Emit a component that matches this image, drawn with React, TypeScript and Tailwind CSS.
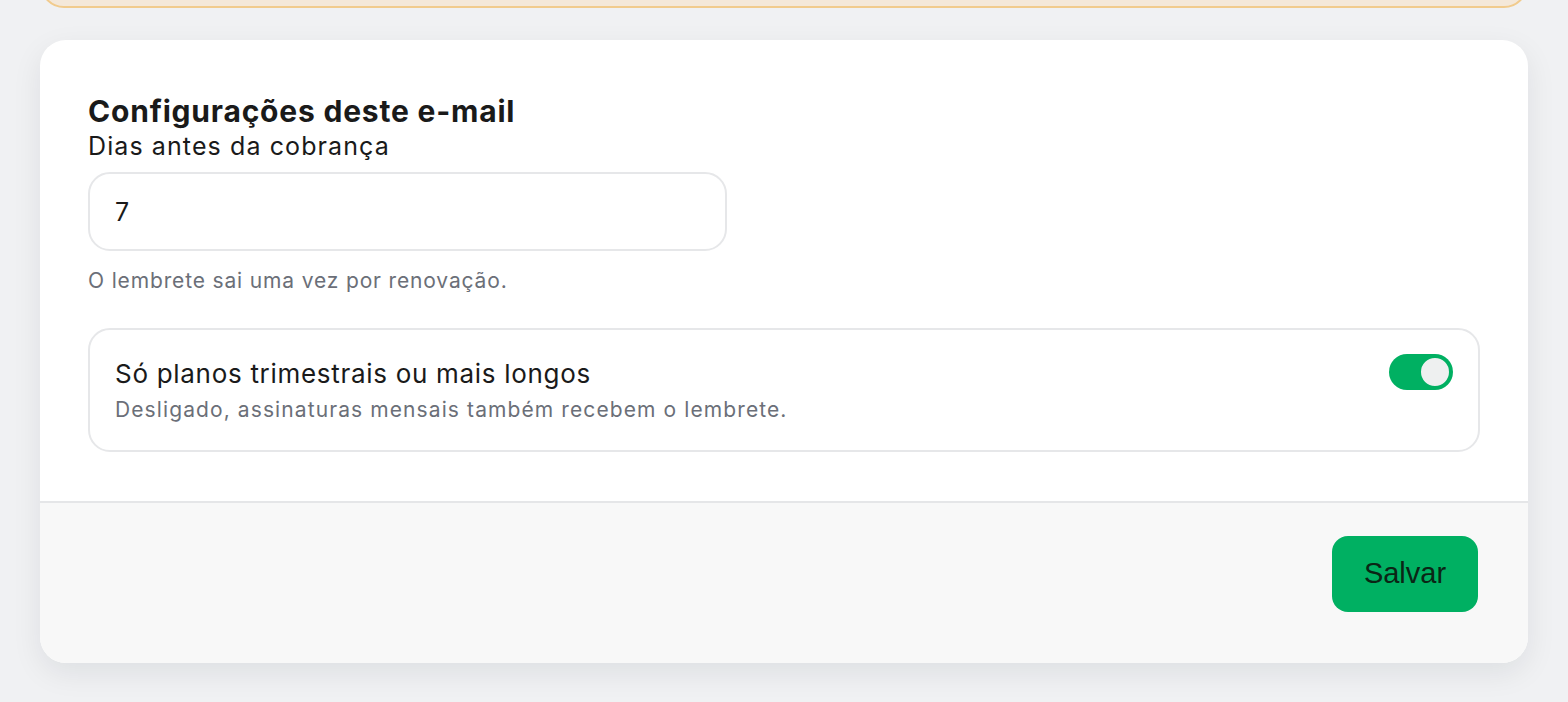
import React, { useState } from "react";

const App: React.FC = () => {
  const [days, setDays] = useState("7");
  const [longPlansOnly, setLongPlansOnly] = useState(true);

  return (
    <div
      className="min-h-screen bg-[#f0f1f3] px-[40px] pb-[40px]"
      style={{ fontFamily: "Inter, 'Noto Sans', sans-serif" }}
    >
      {/* warning banner from the section above, only its bottom edge is visible */}
      <div className="-mt-[40px] h-[48px] rounded-[24px] border-2 border-[#f1cb8d] bg-[#f4e8d9]" />

      <div className="mt-[32px] overflow-hidden rounded-[26px] bg-white shadow-[0_10px_30px_rgba(15,23,42,0.08)]">
        <div className="px-[48px] pt-[53px] pb-[49px]">
          <h2 className="text-[30px] font-bold leading-[36px] tracking-[0.8px] text-[#1a1a1a]">
            Configurações deste e-mail
          </h2>
          <label className="block text-[25px] leading-[34px] tracking-[1.1px] text-[#1a1a1a]">
            Dias antes da cobrança
          </label>

          <input
            value={days}
            onChange={(e) => setDays(e.target.value)}
            className="mt-[9px] block h-[79px] w-[639px] rounded-[22px] border-2 border-[#e6e7e9] bg-white px-[25px] text-[25px] text-[#1a1a1a] outline-none"
          />
          <p className="mt-[16px] text-[21px] leading-[28px] tracking-[0.85px] text-[#6b6f78]">
            O lembrete sai uma vez por renovação.
          </p>

          <div className="mt-[33px] flex items-start justify-between rounded-[22px] border-2 border-[#e6e7e9] px-[25px] pt-[24px] pb-[24px]">
            <div className="flex flex-col">
              <span className="text-[26px] leading-[40px] tracking-[0.7px] text-[#1a1a1a]">
                Só planos trimestrais ou mais longos
              </span>
              <span className="text-[21px] leading-[32px] tracking-[1.1px] text-[#6b6f78]">
                Desligado, assinaturas mensais também recebem o lembrete.
              </span>
            </div>
            <button
              onClick={() => setLongPlansOnly(!longPlansOnly)}
              className={`flex h-[36px] w-[64px] items-center rounded-full p-[2px] ${
                longPlansOnly ? "justify-end bg-[#00b062]" : "justify-start bg-[#d1d5db]"
              }`}
            >
              <span className="h-[32px] w-[32px] rounded-full border-2 border-[#00b062] bg-[#eef0f0]" />
            </button>
          </div>
        </div>

        <div className="flex justify-end border-t-2 border-[#e5e6e8] bg-[#f8f8f8] px-[50px] pt-[33px] pb-[51px]">
          <button
            className="h-[76px] w-[146px] rounded-[16px] bg-[#00b062] text-[29px] text-[#0b2515]"
            style={{ fontFamily: "'Liberation Sans', Arial, sans-serif" }}
          >
            Salvar
          </button>
        </div>
      </div>
    </div>
  );
};

export default App;
